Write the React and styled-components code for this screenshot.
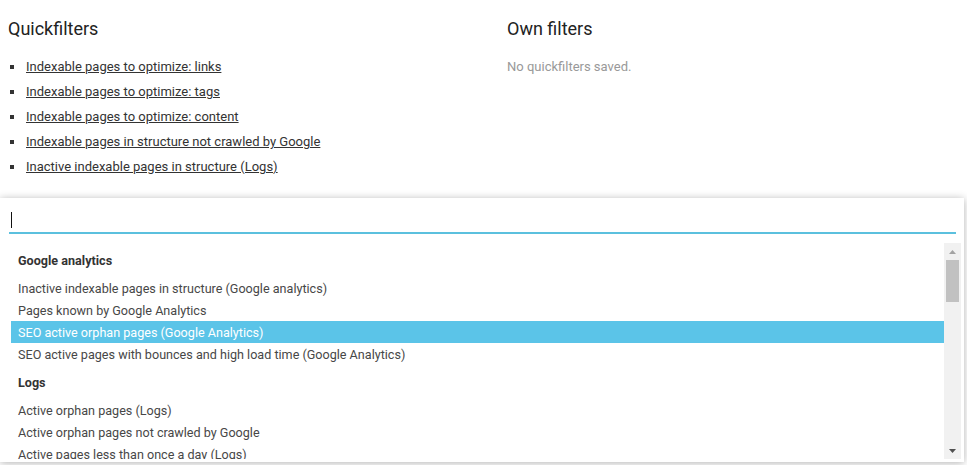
import React from 'react';
import styled, { createGlobalStyle } from 'styled-components';

const GlobalStyle = createGlobalStyle`
  html, body {
    margin: 0;
    padding: 0;
    background: #fff;
    font-family: Roboto, "Liberation Sans", Arial, sans-serif;
  }
`;

const Page = styled.div`
  position: relative;
  width: 967px;
  height: 465px;
  overflow: hidden;
  background: #fff;
`;

const Columns = styled.div`
  display: grid;
  grid-template-columns: 499px 1fr;
  padding: 18px 0 0 8px;
`;

const Column = styled.section`
  display: flex;
  flex-direction: column;
`;

const Heading = styled.h3`
  margin: 0 0 14px;
  font-size: 18px;
  line-height: 22px;
  font-weight: 400;
  color: #222;
`;

const FilterList = styled.ul`
  list-style: none;
  margin: 0;
  padding: 0;
`;

const FilterItem = styled.li`
  position: relative;
  padding-left: 18px;
  font-size: 13px;
  line-height: 25px;
  color: #333;

  &::before {
    content: '';
    position: absolute;
    left: 2px;
    top: 11px;
    width: 4px;
    height: 4px;
    background: #333;
  }
`;

const FilterLink = styled.a`
  color: #333;
  text-decoration: underline;
  cursor: pointer;
`;

const Empty = styled.p`
  margin: 0;
  font-size: 13px;
  line-height: 25px;
  color: #999;
`;

const Dropdown = styled.div`
  position: absolute;
  top: 198px;
  left: 0;
  width: 964px;
  height: 264px;
  background: #fff;
  box-shadow: 0 1px 8px rgba(0, 0, 0, 0.3);
  display: flex;
  flex-direction: column;
`;

const SearchField = styled.div`
  box-sizing: border-box;
  height: 36px;
  margin: 0 8px 0 9px;
  padding: 0 0 4px 2px;
  border-bottom: 2px solid #5bc0de;
  display: flex;
  align-items: flex-end;
`;

const Caret = styled.span`
  display: block;
  width: 1px;
  height: 16px;
  background: #111;
`;

const Results = styled.div`
  flex: 1;
  min-height: 0;
  margin: 9px 3px 3px 11px;
  display: flex;
`;

const Options = styled.div`
  flex: 1;
  overflow: hidden;
`;

const GroupLabel = styled.div`
  box-sizing: border-box;
  height: 34px;
  padding: 1px 7px 0;
  line-height: 33px;
  font-size: 12.6px;
  font-weight: 700;
  color: #333;
`;

const Option = styled.div`
  box-sizing: border-box;
  height: 22px;
  padding: 1px 7px 0;
  line-height: 21px;
  font-size: 12.6px;
  white-space: nowrap;
  color: ${p => (p.$active ? '#fff' : '#474747')};
  background: ${p => (p.$active ? '#5bc4e8' : 'transparent')};
`;

const Scrollbar = styled.div`
  width: 17px;
  background: #f1f1f1;
  display: flex;
  flex-direction: column;
  align-items: center;
`;

const ArrowButton = styled.div`
  height: 17px;
  width: 17px;
  display: flex;
  align-items: center;
  justify-content: center;
`;

const Track = styled.div`
  flex: 1;
  width: 13px;
`;

const Thumb = styled.div`
  width: 13px;
  height: 42px;
  background: #c1c1c1;
`;

const Arrow = ({ up, color }) => (
  <svg width="7" height="4" viewBox="0 0 7 4">
    <path d={up ? 'M0 4 L3.5 0 L7 4 Z' : 'M0 0 L7 0 L3.5 4 Z'} fill={color} />
  </svg>
);

const quickfilters = [
  'Indexable pages to optimize: links',
  'Indexable pages to optimize: tags',
  'Indexable pages to optimize: content',
  'Indexable pages in structure not crawled by Google',
  'Inactive indexable pages in structure (Logs)',
];

const groups = [
  {
    label: 'Google analytics',
    options: [
      'Inactive indexable pages in structure (Google analytics)',
      'Pages known by Google Analytics',
      'SEO active orphan pages (Google Analytics)',
      'SEO active pages with bounces and high load time (Google Analytics)',
    ],
  },
  {
    label: 'Logs',
    options: [
      'Active orphan pages (Logs)',
      'Active orphan pages not crawled by Google',
      'Active pages less than once a day (Logs)',
    ],
  },
];

const activeOption = 'SEO active orphan pages (Google Analytics)';

export default function App() {
  return (
    <Page>
      <GlobalStyle />
      <Columns>
        <Column>
          <Heading>Quickfilters</Heading>
          <FilterList>
            {quickfilters.map(f => (
              <FilterItem key={f}>
                <FilterLink>{f}</FilterLink>
              </FilterItem>
            ))}
          </FilterList>
        </Column>
        <Column>
          <Heading>Own filters</Heading>
          <Empty>No quickfilters saved.</Empty>
        </Column>
      </Columns>

      <Dropdown>
        <SearchField>
          <Caret />
        </SearchField>
        <Results>
          <Options>
            {groups.map(g => (
              <div key={g.label}>
                <GroupLabel>{g.label}</GroupLabel>
                {g.options.map(o => (
                  <Option key={o} $active={o === activeOption}>{o}</Option>
                ))}
              </div>
            ))}
          </Options>
          <Scrollbar>
            <ArrowButton>
              <Arrow up color="#a3a3a3" />
            </ArrowButton>
            <Track>
              <Thumb />
            </Track>
            <ArrowButton>
              <Arrow color="#505050" />
            </ArrowButton>
          </Scrollbar>
        </Results>
      </Dropdown>
    </Page>
  );
}
